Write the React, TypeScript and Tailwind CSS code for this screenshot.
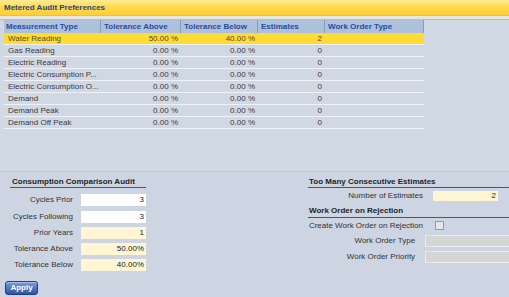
import React from "react"

type Row = { name: string; above: string; below: string; est: string }

const rows: Row[] = [
  { name: "Water Reading", above: "50.00 %", below: "40.00 %", est: "2" },
  { name: "Gas Reading", above: "0.00 %", below: "0.00 %", est: "0" },
  { name: "Electric Reading", above: "0.00 %", below: "0.00 %", est: "0" },
  { name: "Electric Consumption P...", above: "0.00 %", below: "0.00 %", est: "0" },
  { name: "Electric Consumption O...", above: "0.00 %", below: "0.00 %", est: "0" },
  { name: "Demand", above: "0.00 %", below: "0.00 %", est: "0" },
  { name: "Demand Peak", above: "0.00 %", below: "0.00 %", est: "0" },
  { name: "Demand Off Peak", above: "0.00 %", below: "0.00 %", est: "0" },
]

const FieldRow = ({ label, value, cream, h }: { label: string; value: string; cream?: boolean; h: string }) => (
  <div className={`flex items-center ${h}`}>
    <div className="w-[63px] text-right text-[#333]">{label}</div>
    <div
      className={`ml-[8px] w-[65px] h-[12px] flex items-center justify-end pr-[2px] ${
        cream ? "bg-[#fff6d5]" : "bg-white"
      } text-[#222]`}
    >
      {value}
    </div>
  </div>
)

const App = () => {
  return (
    <div
      className="w-[509px] h-[297px] overflow-hidden bg-[#cdd5e2] text-[8px] leading-none flex flex-col"
      style={{ fontFamily: '"Liberation Sans", Arial, sans-serif' }}
    >
      {/* title bar */}
      <div className="h-[16px] flex items-center pl-[4px] bg-gradient-to-b from-[#ffeb94] via-[#ffd944] to-[#fccf3a] border-b border-[#f1bf3c]">
        <span className="font-bold text-[#2a4390]">Metered Audit Preferences</span>
      </div>
      <div className="h-[3px] bg-[#e7e6df]" />

      {/* grid */}
      <div className="h-[152px] bg-[#d0d8e4] border-t border-[#b7c1d2] pl-[4px]">
        <div className="w-[420px]">
          <div className="flex h-[13px] bg-[#adc1dc] text-[#2b4b9e] font-bold">
            <div className="w-[97px] pl-[2px] flex items-center border-r border-[#8a9cb8]">Measurement Type</div>
            <div className="w-[80px] pl-[3px] flex items-center border-r border-[#8a9cb8]">Tolerance Above</div>
            <div className="w-[77px] pl-[3px] flex items-center border-r border-[#8a9cb8]">Tolerance Below</div>
            <div className="w-[67px] pl-[3px] flex items-center border-r border-[#8a9cb8]">Estimates</div>
            <div className="w-[99px] pl-[3px] flex items-center border-r border-[#8a9cb8]">Work Order Type</div>
          </div>
          {rows.map((r, i) => (
            <div
              key={r.name}
              className={`flex h-[12px] items-center border-b border-[#eef1f7] ${
                i === 0 ? "bg-[#fedb35] text-[#5a4a2a]" : "text-[#3e3838]"
              }`}
            >
              <div className="w-[97px] pl-[4px] whitespace-nowrap overflow-hidden">{r.name}</div>
              <div className="w-[80px] pr-[3px] text-right">{r.above}</div>
              <div className="w-[77px] pr-[3px] text-right">{r.below}</div>
              <div className="w-[67px] pr-[3px] text-right">{r.est}</div>
              <div className="w-[99px]" />
            </div>
          ))}
        </div>
      </div>

      {/* lower panel */}
      <div className="flex-1 flex border-t border-[#c1cada] relative">
        <div className="pl-[10px] pt-[6px] flex flex-col">
          <div className="w-[136px] h-[10px] font-bold text-[#1f1f1f] border-b border-[#555] pl-[2px] pb-[1px] flex items-end">
            Consumption Comparison Audit
          </div>
          <div className="mt-[3px] flex flex-col">
            <FieldRow label="Cycles Prior" value="3" h="h-[17px]" />
            <FieldRow label="Cycles Following" value="3" h="h-[17px]" />
            <FieldRow label="Prior Years" value="1" cream h="h-[16px]" />
            <FieldRow label="Tolerance Above" value="50.00%" cream h="h-[16px]" />
            <FieldRow label="Tolerance Below" value="40.00%" cream h="h-[16px]" />
          </div>
          <button className="mt-[8px] -ml-[5px] w-[33px] h-[14px] rounded-[3px] border border-[#1f3c84] bg-gradient-to-b from-[#7d9de0] to-[#2f52a8] text-white font-bold flex items-center justify-center shadow-[inset_0_1px_0_#a9c0ee]">
            Apply
          </button>
        </div>

        <div className="ml-auto w-[201px] pt-[6px] flex flex-col">
          <div className="h-[10px] font-bold text-[#1f1f1f] border-b border-[#555] pl-[1px] pb-[1px] flex items-end">
            Too Many Consecutive Estimates
          </div>
          <div className="h-[16px] flex items-center">
            <div className="w-[115px] text-right text-[#333]">Number of Estimates</div>
            <div className="ml-[10px] w-[65px] h-[10px] bg-[#fff6d5] text-[#222] flex items-center justify-end pr-[2px]">2</div>
          </div>
          <div className="h-[14px] font-bold text-[#1f1f1f] border-b border-[#555] pl-[1px] pb-[2px] flex items-end">
            Work Order on Rejection
          </div>
          <div className="h-[15px] flex items-center">
            <div className="w-[115px] text-right text-[#333]">Create Work Order on Rejection</div>
            <div className="ml-[12px] w-[9px] h-[9px] border border-[#9a9a9a] bg-[#e6e6e6]" />
          </div>
          <div className="h-[16px] flex items-center">
            <div className="w-[115px] text-right text-[#333]">Work Order Type</div>
            <div className="ml-[10px] w-[90px] h-[12px] bg-[#d5d5d5] border border-[#ececec] border-r-0" />
          </div>
          <div className="h-[16px] flex items-center">
            <div className="w-[115px] text-right text-[#333]">Work Order Priority</div>
            <div className="ml-[10px] w-[90px] h-[12px] bg-[#d5d5d5] border border-[#ececec] border-r-0" />
          </div>
        </div>
      </div>
    </div>
  )
}

export default App
